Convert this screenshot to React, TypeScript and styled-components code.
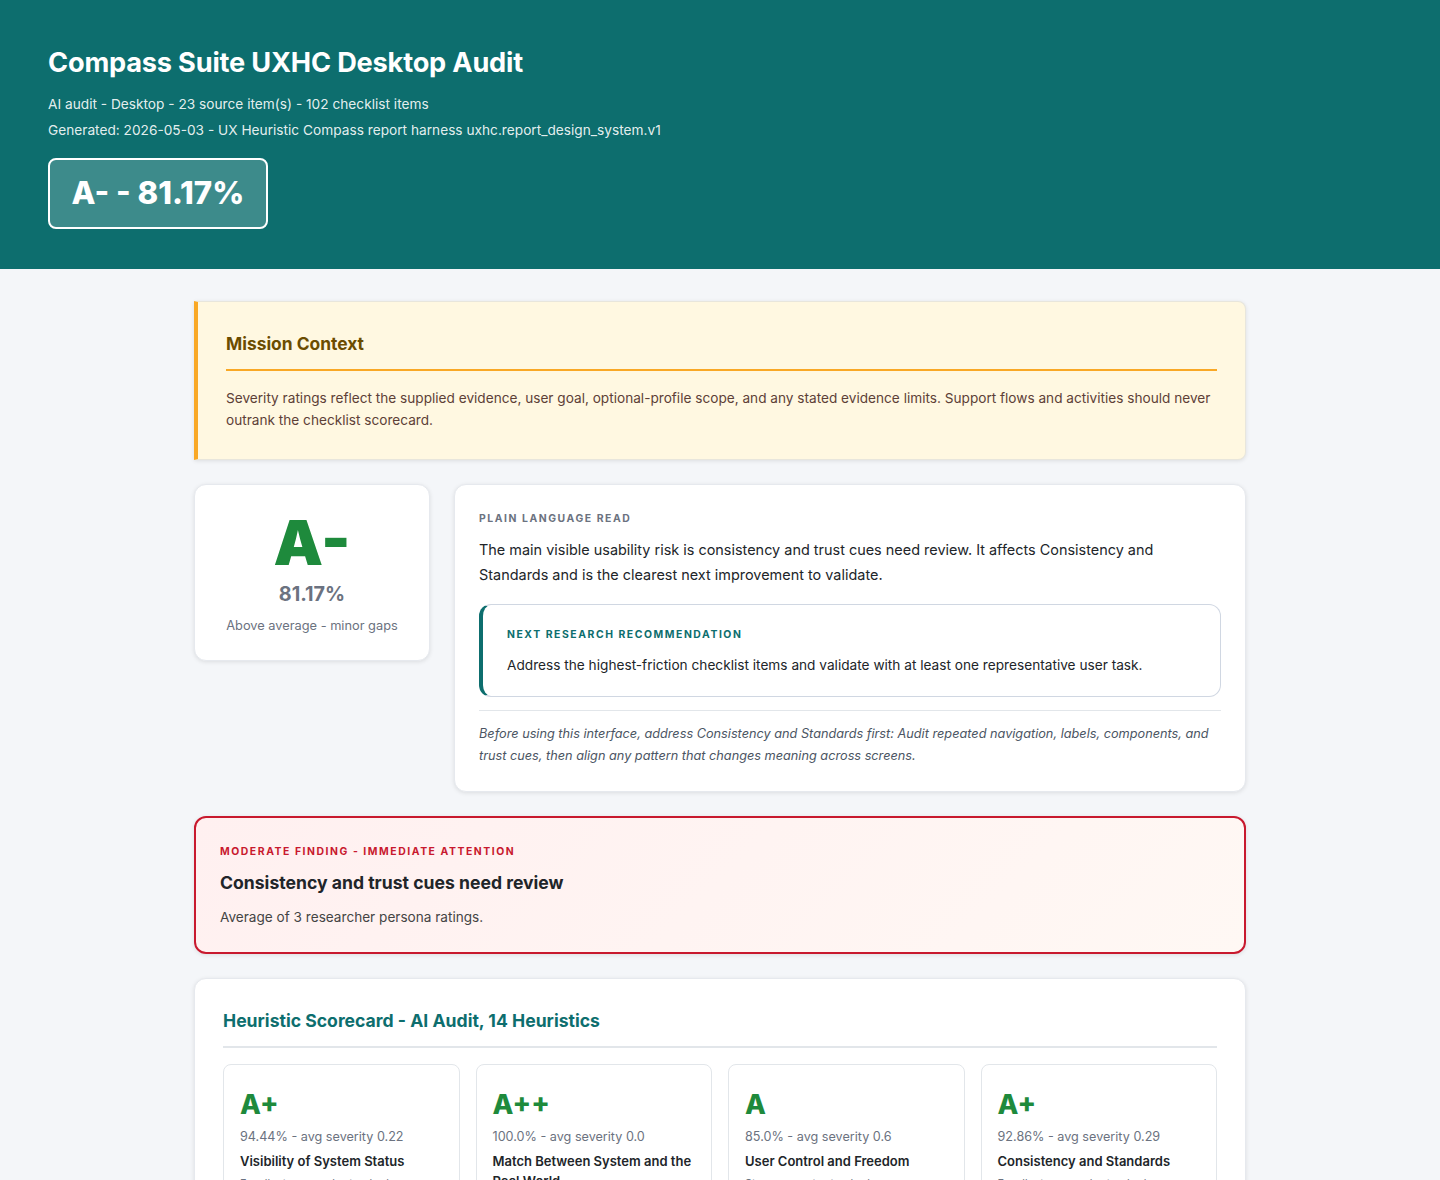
import styled, { createGlobalStyle } from "styled-components";

const GlobalStyle = createGlobalStyle`
  * { box-sizing: border-box; }
  body {
    margin: 0;
    background: #f4f6f9;
    color: #212529;
    font-family: Inter, "Liberation Sans", sans-serif;
    font-size: 13.6px;
    line-height: 1.6;
  }
`;

const Hero = styled.header`
  background: #0d6e6e;
  color: #fff;
  padding: 40px 48px;
  height: 269px;
`;

const HeroTitle = styled.h1`
  margin: 0 0 7px;
  font-size: 27.2px;
  font-weight: 700;
  line-height: 46px;
  letter-spacing: -0.2px;
`;

const HeroMeta = styled.p`
  margin: 0 0 4px;
  font-size: 13.7px;
  line-height: 22px;
  color: rgba(255, 255, 255, 0.9);
`;

const ScoreBadge = styled.div`
  display: inline-block;
  margin-top: 13px;
  padding: 8px 21.5px;
  height: 71px;
  font-size: 31.2px;
  font-weight: 800;
  line-height: 51px;
  background: rgba(255, 255, 255, 0.2);
  border: 2px solid #fff;
  border-radius: 8px;
`;

const Main = styled.main`
  max-width: 1052px;
  margin: 0 auto;
  padding-top: 32px;
  display: flex;
  flex-direction: column;
  gap: 24px;
`;

const Mission = styled.section`
  background: #fff8e1;
  border: 1px solid #e8e6dc;
  border-left: 4px solid #f9a825;
  border-radius: 0 8px 8px 0;
  box-shadow: 0 1px 4px rgba(0, 0, 0, 0.1);
  padding: 28px;
  height: 159px;
`;

const MissionTitle = styled.h2`
  margin: 0 0 16px;
  padding-bottom: 11px;
  border-bottom: 2px solid #f9a825;
  font-size: 17.4px;
  font-weight: 700;
  line-height: 28px;
  color: #6b4c00;
`;

const MissionText = styled.p`
  margin: 0;
  font-size: 13.64px;
  line-height: 22.4px;
  color: #5d4037;
`;

const SummaryRow = styled.div`
  display: grid;
  grid-template-columns: 236px 1fr;
  gap: 24px;
  align-items: start;
`;

const Card = styled.div`
  background: #fff;
  border: 1px solid #e6e9ee;
  border-radius: 12px;
  box-shadow: 0 1px 4px rgba(0, 0, 0, 0.1);
`;

const GradeCard = styled(Card)`
  height: 177px;
  padding: 22px 16px;
  display: flex;
  flex-direction: column;
  align-items: center;
`;

const GradeLetter = styled.div`
  font-size: 62.4px;
  font-weight: 900;
  line-height: 71px;
  color: #1e8a3c;
`;

const GradePercent = styled.div`
  font-size: 19.8px;
  font-weight: 700;
  line-height: 32px;
  color: #6b7280;
`;

const GradeLabel = styled.div`
  margin-top: 5px;
  font-size: 12.8px;
  line-height: 21px;
  color: #6b7280;
`;

const ReadCard = styled(Card)`
  padding: 24px;
  height: 308px;
`;

const Eyebrow = styled.div<{ $color: string }>`
  margin: 2px 0 -2px;
  font-size: 10.4px;
  font-weight: 700;
  letter-spacing: 0.15em;
  line-height: 16.6px;
  text-transform: uppercase;
  color: ${(props) => props.$color};
`;

const ReadText = styled.p`
  margin: 11px 0 0;
  font-size: 14.45px;
  line-height: 25px;
  color: #212529;
`;

const NextBox = styled.div`
  margin-top: 17px;
  height: 93px;
  padding: 20px 24px;
  border: 1px solid #d0d7e2;
  border-left: 4px solid #0d6e6e;
  border-radius: 12px;
`;

const NextText = styled.p`
  margin: 13px 0 0;
  font-size: 13.66px;
  line-height: 22px;
  color: #212529;
`;

const ReadNote = styled.p`
  margin: 13px 0 0;
  padding-top: 12px;
  border-top: 1px solid #e2e6ea;
  font-size: 12.72px;
  font-style: italic;
  line-height: 22px;
  color: #4b5563;
`;

const Finding = styled.section`
  height: 138px;
  padding: 24px;
  border: 2px solid #c8192e;
  border-radius: 12px;
  background: linear-gradient(135deg, #fff0f0, #fff8f4);
  box-shadow: 0 1px 4px rgba(0, 0, 0, 0.1);
`;

const FindingTitle = styled.h3`
  margin: 9px 0 0;
  font-size: 17.6px;
  font-weight: 700;
  line-height: 29px;
  color: #212529;
`;

const FindingText = styled.p`
  margin: 9px 0 0;
  font-size: 13.6px;
  line-height: 22px;
  color: #444;
`;

const Scorecard = styled(Card)`
  padding: 27px 28px 28px;
`;

const ScoreTitle = styled.h2`
  margin: 0 0 16px;
  padding-bottom: 11px;
  border-bottom: 2px solid #e2e6ea;
  font-size: 17.6px;
  font-weight: 700;
  line-height: 29px;
  color: #0d6e6e;
`;

const HeuristicGrid = styled.div`
  display: grid;
  grid-template-columns: repeat(4, 1fr);
  gap: 16px;
`;

const HeuristicCard = styled.div`
  padding: 17px 16px 16px;
  border: 1px solid #e2e6ea;
  border-radius: 8px;
`;

const HeuristicGrade = styled.div`
  font-size: 27.2px;
  font-weight: 800;
  line-height: 45px;
  color: #1e8a3c;
`;

const HeuristicScore = styled.div`
  font-size: 12.64px;
  line-height: 20px;
  color: #6b7280;
`;

const HeuristicName = styled.div`
  margin-top: 4px;
  font-size: 13px;
  font-weight: 600;
  line-height: 20px;
  color: #212529;
`;

const HeuristicNote = styled.div`
  margin-top: 3px;
  font-size: 10.88px;
  line-height: 18px;
  color: #6b7280;
`;

const heuristics = [
  { grade: "A+", score: "94.44% - avg severity 0.22", name: "Visibility of System Status", note: "Excellent - exceeds standards" },
  { grade: "A++", score: "100.0% - avg severity 0.0", name: "Match Between System and the Real World", note: "Exceptional - exceeds standards" },
  { grade: "A", score: "85.0% - avg severity 0.6", name: "User Control and Freedom", note: "Strong - meets standards" },
  { grade: "A+", score: "92.86% - avg severity 0.29", name: "Consistency and Standards", note: "Excellent - exceeds standards" },
];

export default function App() {
  return (
    <>
      <GlobalStyle />
      <Hero>
        <HeroTitle>Compass Suite UXHC Desktop Audit</HeroTitle>
        <HeroMeta>AI audit - Desktop - 23 source item(s) - 102 checklist items</HeroMeta>
        <HeroMeta>Generated: 2026-05-03 - UX Heuristic Compass report harness uxhc.report_design_system.v1</HeroMeta>
        <ScoreBadge>A- - 81.17%</ScoreBadge>
      </Hero>
      <Main>
        <Mission>
          <MissionTitle>Mission Context</MissionTitle>
          <MissionText>
            Severity ratings reflect the supplied evidence, user goal, optional-profile scope, and any stated evidence limits. Support flows and activities should never outrank the checklist scorecard.
          </MissionText>
        </Mission>
        <SummaryRow>
          <GradeCard>
            <GradeLetter>A-</GradeLetter>
            <GradePercent>81.17%</GradePercent>
            <GradeLabel>Above average - minor gaps</GradeLabel>
          </GradeCard>
          <ReadCard>
            <Eyebrow $color="#6b7280">Plain language read</Eyebrow>
            <ReadText>
              The main visible usability risk is consistency and trust cues need review. It affects Consistency and Standards and is the clearest next improvement to validate.
            </ReadText>
            <NextBox>
              <Eyebrow $color="#0d6e6e">Next research recommendation</Eyebrow>
              <NextText>Address the highest-friction checklist items and validate with at least one representative user task.</NextText>
            </NextBox>
            <ReadNote>
              Before using this interface, address Consistency and Standards first: Audit repeated navigation, labels, components, and trust cues, then align any pattern that changes meaning across screens.
            </ReadNote>
          </ReadCard>
        </SummaryRow>
        <Finding>
          <Eyebrow $color="#c8192e">Moderate finding - immediate attention</Eyebrow>
          <FindingTitle>Consistency and trust cues need review</FindingTitle>
          <FindingText>Average of 3 researcher persona ratings.</FindingText>
        </Finding>
        <Scorecard>
          <ScoreTitle>Heuristic Scorecard - AI Audit, 14 Heuristics</ScoreTitle>
          <HeuristicGrid>
            {heuristics.map((h) => (
              <HeuristicCard key={h.name}>
                <HeuristicGrade>{h.grade}</HeuristicGrade>
                <HeuristicScore>{h.score}</HeuristicScore>
                <HeuristicName>{h.name}</HeuristicName>
                <HeuristicNote>{h.note}</HeuristicNote>
              </HeuristicCard>
            ))}
          </HeuristicGrid>
        </Scorecard>
      </Main>
    </>
  );
}
